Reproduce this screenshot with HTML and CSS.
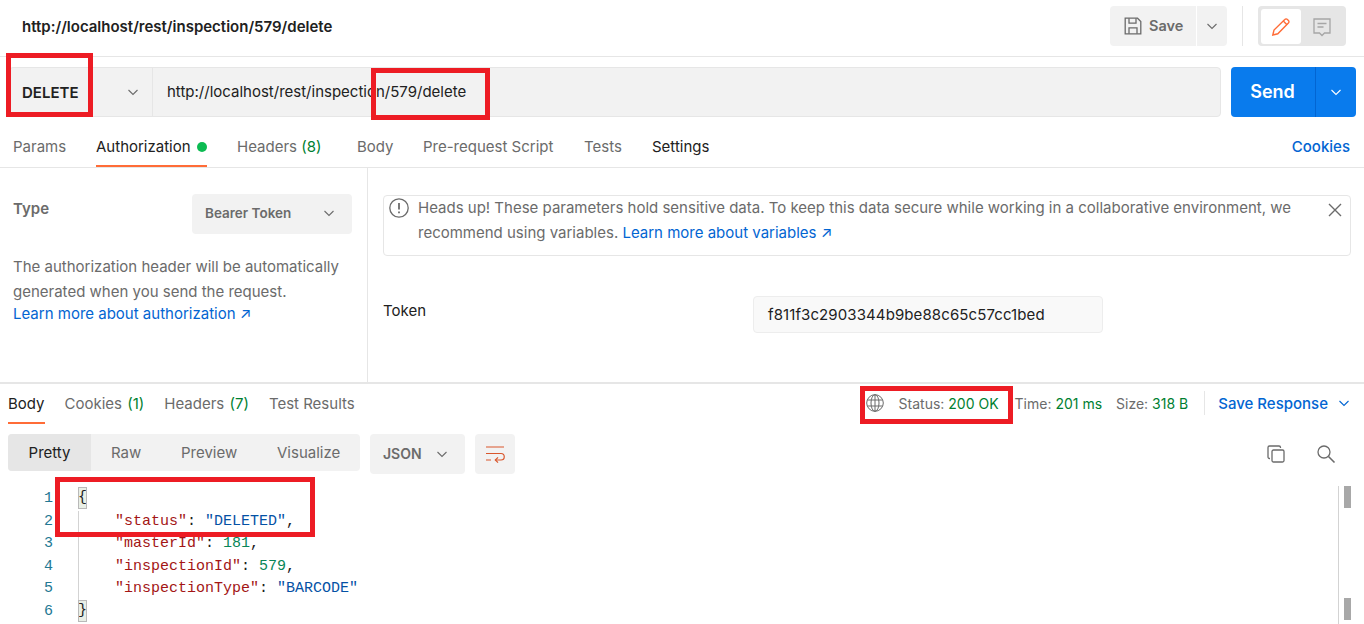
FILE: index.html
```html
<!DOCTYPE html>
<html lang="en">
<head>
<meta charset="utf-8">
<title>Postman request</title>
<link rel="stylesheet" href="styles.css">
</head>
<body>
<div class="app">
  <header class="header">
    <div class="title">http://localhost/rest/inspection/579/delete</div>
    <div class="header-actions">
      <button class="save">
        <svg width="20" height="20" viewBox="0 0 20 20" fill="none" stroke="#6b6b6b" stroke-width="1.3"><path d="M2.2 2.2h12.3l3.3 3.3v12.3H2.2z"/><path d="M6 2.2v5h7v-5"/><path d="M6 17.8v-6h8v6"/></svg>
        <span>Save</span>
      </button>
      <button class="save-more"><svg class="chev" viewBox="0 0 12 12"><path d="M1.5 4l4.5 4.5L10.500 4"/></svg></button>
      <div class="vdivider"></div>
      <div class="toggle">
        <div class="toggle-on">
          <svg width="20" height="20" viewBox="0 0 20 20" fill="none" stroke="#ff6c37" stroke-width="1.4"><path d="M1.800 18l1.200-5L13.800 2.400a1.800 1.800 0 0 1 2.600 0l1 1a1.800 1.800 0 0 1 0 2.600L6.800 16.800z"/><path d="M12.300 4l3.700 3.700"/></svg>
        </div>
        <div class="toggle-off">
          <svg width="20" height="20" viewBox="0 0 20 20" fill="none" stroke="#a6a6a6" stroke-width="1.300"><path d="M2 2h16v14h-5.500L10 18.500 7.500 16H2z"/><path d="M5.500 6.500h9M5.500 10h6"/></svg>
        </div>
      </div>
    </div>
  </header>

  <section class="reqbar">
    <div class="url-group">
      <div class="method"><span>DELETE</span><svg class="chev" viewBox="0 0 12 12"><path d="M1.500 4l4.500 4.500L10.500 4"/></svg></div>
      <div class="url">http://localhost/rest/inspection/579/delete</div>
    </div>
    <div class="send">
      <span class="send-label">Send</span>
      <span class="send-more"><svg class="chev white" viewBox="0 0 12 12"><path d="M1.500 4l4.500 4.500L10.500 4"/></svg></span>
    </div>
  </section>

  <nav class="req-tabs">
    <a class="rt t-params">Params</a>
    <a class="rt t-auth active">Authorization <i class="dot"></i></a>
    <a class="rt t-headers">Headers <em>(8)</em></a>
    <a class="rt t-body">Body</a>
    <a class="rt t-pre">Pre-request Script</a>
    <a class="rt t-tests">Tests</a>
    <a class="rt t-settings">Settings</a>
    <a class="cookies">Cookies</a>
  </nav>

  <section class="auth">
    <aside class="auth-left">
      <div class="type-row">
        <span class="type-label">Type</span>
        <div class="type-select"><span>Bearer Token</span><svg class="chev" viewBox="0 0 12 12"><path d="M1.500 4l4.500 4.500L10.500 4"/></svg></div>
      </div>
      <p class="auth-help">The authorization header will be automatically generated when you send the request.</p>
      <a class="link auth-link">Learn more about authorization ↗</a>
    </aside>
    <div class="auth-right">
      <div class="alert">
        <svg class="alert-icon" width="20" height="20" viewBox="0 0 20 20" fill="none" stroke="#6b6b6b" stroke-width="1.300"><circle cx="10" cy="10" r="9.200"/><path d="M10 5v6.500" stroke-width="1.800"/><path d="M10 13.500v1.800" stroke-width="1.800"/></svg>
        <p>Heads up! These parameters hold sensitive data. To keep this data secure while working in a collaborative environment, we recommend using variables. <a class="link">Learn more about variables ↗</a></p>
        <svg class="alert-close" width="14" height="14" viewBox="0 0 14 14" stroke="#6b6b6b" stroke-width="1.400"><path d="M1 1l12 12M13 1L1 13"/></svg>
      </div>
      <div class="token-row">
        <label class="token-label">Token</label>
        <div class="token-input">f811f3c2903344b9be88c65c57cc1bed</div>
      </div>
    </div>
  </section>

  <section class="response">
    <div class="res-head">
      <div class="res-tabs">
        <a class="rs active">Body</a>
        <a class="rs">Cookies <em>(1)</em></a>
        <a class="rs">Headers <em>(7)</em></a>
        <a class="rs">Test Results</a>
      </div>
      <div class="res-meta">
        <svg class="globe" width="18" height="18" viewBox="0 0 18 18" fill="none" stroke="#6b6b6b" stroke-width="1"><circle cx="9" cy="9" r="8.300"/><ellipse cx="9" cy="9" rx="4" ry="8.300"/><path d="M1.500 6h15M1.500 12h15M9 .7v16.600"/></svg>
        <span class="m-status">Status: <b>200 OK</b></span>
        <span class="m-time">Time: <b>201 ms</b></span>
        <span class="m-size">Size: <b>318 B</b></span>
        <span class="m-div"></span>
        <a class="save-resp">Save Response</a>
        <svg class="chev blue" viewBox="0 0 12 12"><path d="M1.500 4l4.500 4.500L10.500 4"/></svg>
      </div>
    </div>
    <div class="res-tools">
      <div class="views">
        <span class="v v-on">Pretty</span>
        <span class="v v-raw">Raw</span>
        <span class="v v-preview">Preview</span>
        <span class="v v-vis">Visualize</span>
      </div>
      <div class="lang"><span>JSON</span><svg class="chev" viewBox="0 0 12 12"><path d="M1.500 4l4.500 4.500L10.500 4"/></svg></div>
      <div class="wrap">
        <svg width="20" height="20" viewBox="0 0 20 20" fill="none" stroke="#d9572d" stroke-width="1.200"><path d="M1 3h18M1 9.500h15a2.700 2.700 0 0 1 0 6.500h-5.500M1 16h5"/><path d="M13 13.300L10.300 16l2.700 2.700"/></svg>
      </div>
      <div class="tool-icons">
        <svg width="20" height="20" viewBox="0 0 20 20" fill="none" stroke="#6b6b6b" stroke-width="1.300"><path d="M4 14.500H3.500A1.500 1.500 0 0 1 2 13V3.500A1.500 1.500 0 0 1 3.500 2H13a1.500 1.500 0 0 1 1.500 1.500V4"/><rect x="6" y="6" width="12" height="12" rx="1.500"/></svg>
        <svg width="20" height="20" viewBox="0 0 20 20" fill="none" stroke="#6b6b6b" stroke-width="1.300"><circle cx="8" cy="8" r="6"/><path d="M12.500 12.500L18.500 18.500" stroke-width="1.600"/></svg>
      </div>
    </div>
    <div class="code-area">
      <div class="gutter"><div>1</div><div>2</div><div>3</div><div>4</div><div>5</div><div>6</div></div>
      <div class="code">
        <div class="line"><span class="brace">{</span></div>
        <div class="line guide">    <span class="k">"status"</span>: <span class="s">"DELETED"</span>,</div>
        <div class="line guide">    <span class="k">"masterId"</span>: <span class="n">181</span>,</div>
        <div class="line guide">    <span class="k">"inspectionId"</span>: <span class="n">579</span>,</div>
        <div class="line guide">    <span class="k">"inspectionType"</span>: <span class="s">"BARCODE"</span></div>
        <div class="line"><span class="brace">}</span></div>
      </div>
      <div class="scrollbar"><i></i><i></i></div>
    </div>
  </section>
</div>

<div class="mark m1"></div>
<div class="mark m2"></div>
<div class="mark m3"></div>
<div class="mark m4"></div>
</body>
</html>
```
FILE: styles.css
```css
* { box-sizing: border-box; }
html, body { margin: 0; padding: 0; height: 100%; overflow: hidden; background: #fff; }
body { font-family: Inter, "Liberation Sans", sans-serif; font-size: 15px; color: #6b6b6b; }
a { text-decoration: none; }
button { font: inherit; border: 0; padding: 0; }
p { margin: 0; }
em { font-style: normal; color: #007f31; }
.app { width: 1364px; height: 624px; display: flex; flex-direction: column; }

.chev { width: 12px; height: 12px; fill: none; stroke: #6b6b6b; stroke-width: 1.100; flex: none; }
.chev.white { stroke: #fff; }
.chev.blue { stroke: #0265d2; }
.link { color: #0265d2; }

.header { height: 57px; flex: none; display: flex; align-items: flex-start; border-bottom: 1px solid #e6e6e6; padding: 6px 18px 0 22px; }
.title { font-weight: 600; color: #212121; line-height: 41px; flex: 1; }
.header-actions { display: flex; align-items: center; height: 40px; }
.save { width: 86px; height: 40px; background: #f2f2f2; border-radius: 4px 0 0 4px; display: flex; align-items: center; gap: 6px; padding: 0 0 2px 13px; color: #6b6b6b; font-weight: 600; font-size: 14.500px; }
.save svg { margin-top: 2px; }
.save-more { width: 30px; height: 40px; margin-left: 1px; background: #f2f2f2; border-radius: 0 4px 4px 0; display: flex; align-items: center; justify-content: center; }
.vdivider { width: 1px; height: 40px; background: #e6e6e6; margin: 0 15px; }
.toggle { width: 88px; height: 40px; background: #e6e6e6; border-radius: 4px; padding: 3px; display: flex; }
.toggle-on { width: 40px; height: 35px; background: #fff; border-radius: 3px; display: flex; align-items: center; justify-content: center; }
.toggle-off { width: 42px; height: 35px; display: flex; align-items: center; justify-content: center; }

.reqbar { flex: none; height: 60px; padding: 10px 8px 0 9px; display: flex; gap: 10px; }
.url-group { flex: 1; height: 50px; display: flex; background: #f2f2f2; border: 1px solid #e6e6e6; border-radius: 4px; align-items: stretch; }
.method { width: 143px; flex: none; display: flex; align-items: center; justify-content: space-between; padding: 0 13px 0 12px; border-right: 1px solid #e6e6e6; font-weight: 600; color: #212121; }
.url { padding-left: 14px; line-height: 48px; color: #212121; }
.send { width: 125px; height: 50px; flex: none; background: #097bed; border-radius: 4px; display: flex; color: #fff; font-weight: 600; font-size: 18px; }
.send-label { width: 85px; text-align: center; padding-right: 1px; line-height: 50px; border-right: 1px solid #0265d2; }
.send-more { flex: 1; display: flex; align-items: center; justify-content: center; }

.req-tabs { flex: none; height: 51px; display: flex; align-items: flex-start; border-bottom: 1px solid #e6e6e6; padding-left: 13px; }
.rt { line-height: 20px; padding-top: 20px; height: 50px; }
.rt.active { color: #212121; border-bottom: 2px solid #ff6c37; }
.t-params { width: 83px; }
.t-auth { width: 111px; margin-right: 30px; }
.t-headers { width: 120px; }
.t-body { width: 66px; }
.t-pre { width: 161px; }
.t-tests { width: 68px; }
.t-settings { color: #212121; }
.dot { display: inline-block; width: 10px; height: 10px; border-radius: 50%; background: #0cbb52; margin-left: 2px; }
.cookies { margin-left: auto; margin-right: 14px; line-height: 20px; padding-top: 20px; color: #0265d2; font-weight: 500; }

.auth { flex: none; height: 214px; display: flex; }
.auth-left { width: 368px; flex: none; border-right: 1px solid #e6e6e6; padding: 26px 15px 0 13px; }
.type-row { display: flex; justify-content: space-between; align-items: flex-start; }
.type-label { font-weight: 600; line-height: 30px; }
.type-select { width: 160px; height: 40px; background: #f2f2f2; border-radius: 4px; display: flex; align-items: center; justify-content: space-between; padding: 0 17px 2px 13px; font-weight: 600; font-size: 13.500px; }
.auth-help { margin-top: 20px; line-height: 25px; width: 340px; }
.auth-link { display: block; line-height: 20px; }
.auth-right { flex: 1; padding: 27px 13px 0 15px; }
.alert { height: 61px; border: 1px solid #e6e6e6; border-radius: 4px; display: flex; padding: 0 8px 0 5px; }
.alert-icon { margin: 2px 9px 0 0; flex: none; }
.alert p { flex: 1; line-height: 25px; margin-top: -1px; }
.alert-close { flex: none; margin: 7px 0 0 14px; }
.token-row { display: flex; margin-top: 40px; }
.token-label { width: 370px; color: #212121; line-height: 30px; }
.token-input { width: 350px; height: 37px; background: #f9f9f9; border: 1px solid #ededed; border-radius: 4px; padding: 0 14px; line-height: 35px; color: #212121; letter-spacing: .1px; }

.response { flex: 1; border-top: 2px solid #e6e6e6; min-height: 0; display: flex; flex-direction: column; }
.res-head { flex: none; height: 40px; display: flex; justify-content: space-between; padding-left: 8px; }
.res-tabs { display: flex; gap: 20px; }
.rs { line-height: 20px; padding-top: 10px; height: 40px; }
.rs em { margin-left: 1px; }
.rs.active { color: #212121; border-bottom: 2px solid #ff6c37; }
.res-meta { display: flex; align-items: center; height: 38px; padding-right: 14px; font-size: 14px; }
.res-meta b { font-weight: 400; color: #007f31; }
.globe { margin-right: 15px; }
.m-status { margin-right: 16px; }
.m-time { margin-right: 14px; }
.m-div { width: 1px; height: 24px; background: #e6e6e6; margin: 0 13px 0 16px; }
.save-resp { color: #0265d2; font-weight: 500; margin-right: 10px; font-size: 15px; }

.res-tools { flex: none; height: 62px; padding: 10px 0 0 8px; display: flex; align-items: flex-start; }
.views { width: 352px; height: 37px; background: #f2f2f2; border-radius: 4px; display: flex; line-height: 38px; overflow: hidden; }
.v { flex: none; }
.v-on { width: 83px; background: #e6e6e6; color: #212121; text-align: center; }
.v-raw { margin-left: 20px; width: 70px; }
.v-preview { width: 96px; }
.lang { width: 95px; height: 40px; margin-left: 10px; background: #f2f2f2; border-radius: 4px; display: flex; align-items: center; justify-content: space-between; padding: 0 17px 2px 13px; font-weight: 600; font-size: 14px; }
.lang .chev { margin-top: 2px; }
.wrap { width: 40px; height: 40px; margin-left: 10px; background: #f2f2f2; border-radius: 4px; display: flex; align-items: center; justify-content: center; }
.tool-icons { margin-left: auto; display: flex; gap: 30px; padding: 10px 28px 0 0; }

.code-area { flex: 1; min-height: 0; display: flex; }
.gutter { width: 78px; padding: 2px 25px 0 0; text-align: right; font-family: "Liberation Mono", monospace; font-size: 15px; line-height: 22.500px; color: #237893; }
.code { flex: 1; padding-top: 2px; font-family: "Liberation Mono", monospace; font-size: 15px; line-height: 22.500px; color: #212121; }
.line { height: 22.500px; white-space: pre; }
.guide { border-left: 1px solid #d3d3d3; }
.brace { display: inline-block; width: 9px; height: 22px; margin-top: -1px; background: #e9efe6; border: 1px solid #b9b9b9; line-height: 20px; text-indent: -1px; overflow: hidden; vertical-align: top; }
.k { color: #a31515; }
.s { color: #0451a5; }
.n { color: #098658; }
.scrollbar { width: 26px; border-left: 1px solid #d3d3d3; display: flex; flex-direction: column; justify-content: space-between; padding: 0 0 4px 5px; }
.scrollbar i { display: block; width: 7px; height: 22px; background: #a8a8a8; }

.mark { position: absolute; border: 5px solid #ed1c24; }
.m1 { left: 6px; top: 53px; width: 87px; height: 64px; }
.m2 { left: 371px; top: 68px; width: 119px; height: 52px; }
.m3 { left: 860px; top: 386px; width: 153px; height: 38px; }
.m4 { left: 55px; top: 477px; width: 260px; height: 60px; }
```
